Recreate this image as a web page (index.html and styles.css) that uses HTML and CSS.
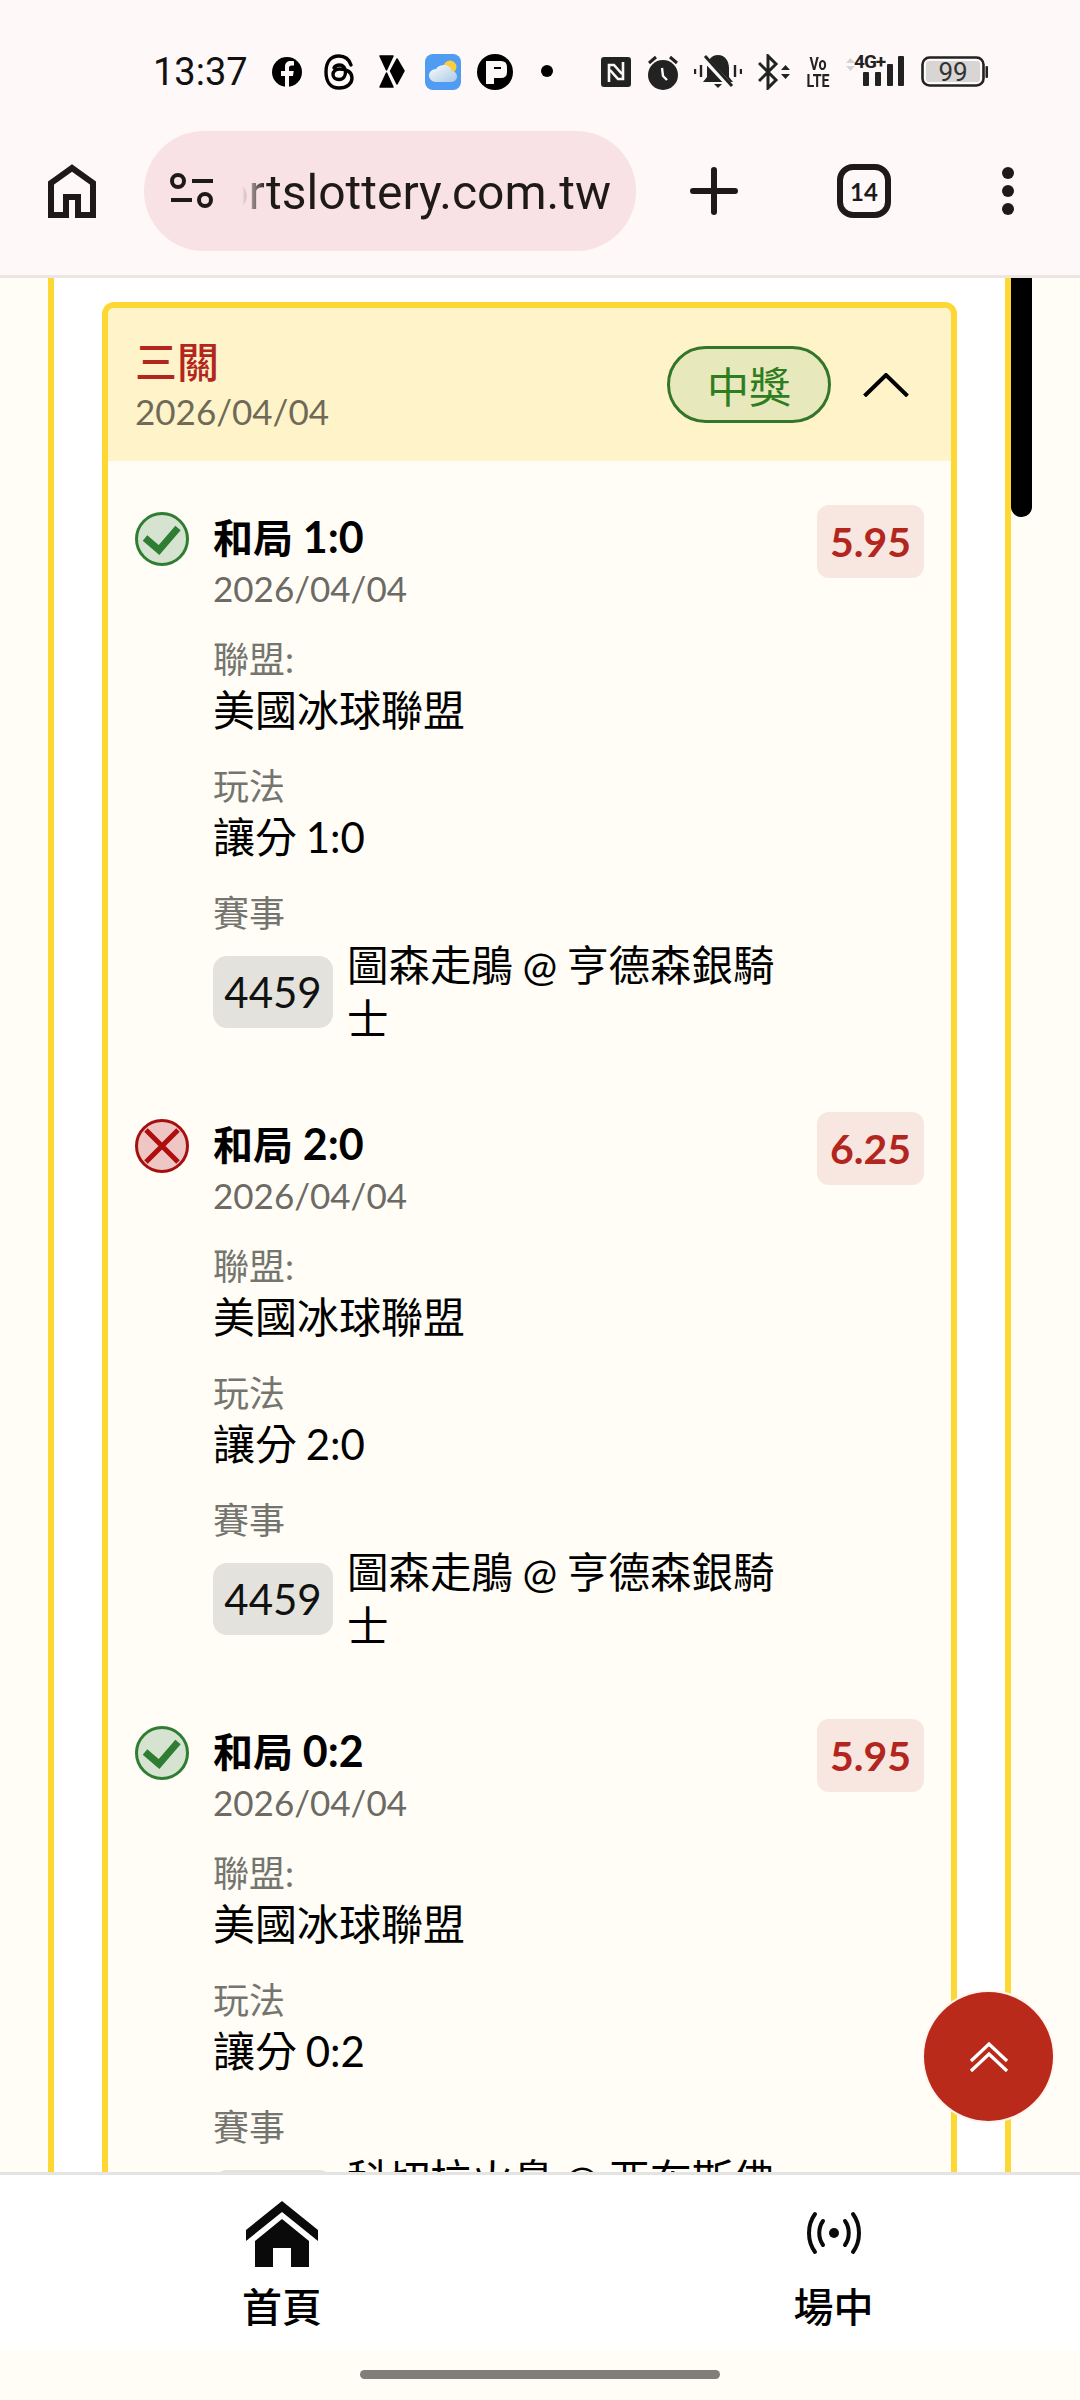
FILE: index.html
```html
<!DOCTYPE html>
<html lang="zh-Hant">
<head>
  <meta charset="UTF-8">
  <title>Sports Lottery</title>
  <link rel="stylesheet" href="styles.css">
</head>
<body>

<div class="phone">
  <!-- Status bar -->
  <div class="statusbar">
    <div class="status-left">
      <span class="clock">13:37</span>
      <svg class="s-icon" viewBox="0 0 36 36"><circle cx="18" cy="18" r="15" fill="#000"/><path fill="#fdf8f8" d="M20 33V22h4l.7-5H20v-3c0-1.500.7-2.500 2.600-2.500H25V7.300c-1-.2-2.300-.3-3.300-.3-3.500 0-5.700 2-5.700 5.800V17h-4v5h4v11z"/></svg>
      <svg class="s-icon" viewBox="0 0 36 36"><path fill="none" stroke="#000" stroke-width="3.400" stroke-linecap="round" d="M30 11C28 5 24 2 18 2 9 2 5 9 5 18s4 16 13 16c8 0 13-4.500 13-10 0-6-5.500-9-12-9-4.500 0-7 2.500-7 5.500 0 3 2.500 5 6 5 4.500 0 6.500-3.500 6.500-7.500 0-4.500-2.500-7-6-7-2.500 0-4.500 1-5.500 2.800"/></svg>
      <svg class="s-icon" viewBox="0 0 36 36"><path fill="#000" stroke="#000" stroke-width="1.500" stroke-linejoin="round" d="M7 2h13l-6.500 14zM24 5l7 12-7 13-6.500-13zM13.500 19L20 33H7z"/></svg>
      <svg class="s-icon" viewBox="0 0 36 36">
        <defs>
          <linearGradient id="cloudFill" x1="0" y1="0" x2="1" y2="1"><stop offset="0" stop-color="#fdfdf8"/><stop offset="1" stop-color="#a8c8e8"/></linearGradient>
        </defs>
        <rect width="36" height="36" rx="8" fill="#4f9cf2"/>
        <circle cx="25" cy="13" r="6.500" fill="#fbcf3a"/>
        <path fill="url(#cloudFill)" d="M11 28c-4 0-7-3-7-6.500S7 15 11 15c2-3 5-4 8-4 4 0 7 2.500 8 6 3 .5 5 2.500 5 5.500s-2.500 5.500-6 5.500z"/>
      </svg>
      <svg class="s-icon" viewBox="0 0 36 36"><circle cx="18" cy="18" r="18" fill="#000"/><path fill="#fdf8f8" d="M9 7h15q6 0 6 6v5q0 6-6 6h-7v6H9z"/><rect x="17" y="13" width="7" height="2" fill="#000"/></svg>
      <svg class="s-icon" viewBox="0 0 36 36"><circle cx="18" cy="17" r="6" fill="#000"/></svg>
    </div>
    <div class="status-right">
      <svg class="i-nfc" viewBox="0 0 31 30"><rect width="30" height="30" rx="3" fill="#222"/><path fill="none" stroke="#fdf8f8" stroke-width="2.600" d="M8 25V8h5l8 9M22 5v17h-5l-8-9"/></svg>
      <svg class="i-alarm" viewBox="0 0 30 36"><circle cx="15" cy="21" r="15" fill="#222"/><path stroke="#222" stroke-width="3" d="M1 9l7-6M29 9l-7-6"/><path fill="none" stroke="#fdf8f8" stroke-width="2.400" d="M14 14l1 8 4 4"/></svg>
      <svg class="i-bell" viewBox="0 0 48 36">
        <path fill="#222" d="M24 1c-7 0-11 6-11 13v9l-4 5h30l-4-5v-9c0-7-4-13-11-13zM20 30h8l-4 4z"/>
        <path stroke="#fdf8f8" stroke-width="6" d="M10 4l28 30"/>
        <path stroke="#222" stroke-width="3" d="M11 2l27 30"/>
        <path stroke="#222" stroke-width="2.400" d="M1 15v5M7 11v12M41 11v12M47 15v5"/>
      </svg>
      <svg class="i-bt" viewBox="0 0 32 36">
        <path fill="none" stroke="#222" stroke-width="3" d="M1 9l17 17-8 8V2l8 8L1 27"/>
        <path fill="#222" d="M23 16l4.500-5 4.500 5zM23 20l4.500 5 4.500-5z"/>
      </svg>
      <div class="volte"><span>Vo</span><span>LTE</span></div>
      <svg class="i-signal" viewBox="0 0 59 36">
        <path fill="#d6d3d2" d="M0 9l4.500-5L9 9zM0 12l4.500 5L9 12z"/>
        <text class="sig-text" x="8" y="14">4G+</text>
        <rect x="17" y="18" width="6" height="14" rx="1" fill="#222"/>
        <rect x="29" y="18" width="6" height="14" rx="1" fill="#222"/>
        <rect x="41" y="10" width="6" height="22" rx="1" fill="#222"/>
        <rect x="52" y="2" width="6" height="30" rx="1" fill="#222"/>
      </svg>
      <svg class="i-batt" viewBox="0 0 67 36">
        <rect x="1.500" y="3.500" width="61" height="28" rx="7" fill="none" stroke="#222" stroke-width="2.600"/>
        <rect x="5" y="7" width="54" height="21" rx="3" fill="#d8d5d5"/>
        <rect x="64.500" y="12" width="2.500" height="12" rx="1" fill="#222"/>
        <text class="batt-text" x="32" y="27">99</text>
      </svg>
    </div>
  </div>

  <!-- Browser toolbar -->
  <div class="toolbar">
    <svg class="tb-home" viewBox="0 0 48 54"><path fill="none" stroke="#1f1a1a" stroke-width="6" d="M3 51V19L24 4l21 15v32H30V33H18v18z"/></svg>
    <div class="urlbar">
      <svg class="tune" viewBox="0 0 48 42">
        <g fill="none" stroke="#1f1a1a" stroke-width="4">
          <circle cx="10" cy="11" r="6"/>
          <circle cx="37" cy="30" r="6"/>
          <path d="M24 11h21M3 30h21"/>
        </g>
      </svg>
      <div class="url"><span>sportslottery.com.tw</span></div>
    </div>
    <svg class="tb-plus" viewBox="0 0 48 48"><path stroke="#1f1a1a" stroke-width="6" stroke-linecap="round" d="M24 3v42M3 24h42"/></svg>
    <div class="tabs-count">14</div>
    <svg class="tb-more" viewBox="0 0 12 48"><circle cx="6" cy="6" r="6" fill="#1f1a1a"/><circle cx="6" cy="24" r="6" fill="#1f1a1a"/><circle cx="6" cy="42" r="6" fill="#1f1a1a"/></svg>
  </div>

  <!-- Page -->
  <div class="page">
    <div class="outer">
      <div class="card">
        <div class="card-head">
          <div class="head-text">
            <div class="head-title">三關</div>
            <div class="head-date">2026/04/04</div>
          </div>
          <div class="won-pill">中獎</div>
          <svg class="chev" viewBox="0 0 46 24"><path fill="none" stroke="#000" stroke-width="4" d="M1.500 23L23 2l21.500 21"/></svg>
        </div>

        <div class="card-body">
          <div class="bet">
            <svg class="mark" viewBox="0 0 54 54"><circle cx="27" cy="27" r="25.500" fill="#d5e3d0" stroke="#2e7d32" stroke-width="3"/><path fill="none" stroke="#2e7d32" stroke-width="7" d="M10 26l14 12 19-22"/></svg>
            <div class="bet-main">
              <div class="bet-title">和局 <span class="score">1:0</span></div>
              <div class="bet-date">2026/04/04</div>
              <div class="label first">聯盟:</div>
              <div class="value">美國冰球聯盟</div>
              <div class="label">玩法</div>
              <div class="value">讓分 1:0</div>
              <div class="label">賽事</div>
              <div class="match">
                <span class="chip">4459</span>
                <span class="teams">圖森走鵑 @ 亨德森銀騎士</span>
              </div>
            </div>
            <div class="odds">5.95</div>
          </div>

          <div class="bet">
            <svg class="mark" viewBox="0 0 54 54"><circle cx="27" cy="27" r="25.500" fill="#eec7c5" stroke="#a50f0f" stroke-width="3"/><path stroke="#b00d0d" stroke-width="5" d="M11 11l32 32M43 11L11 43"/></svg>
            <div class="bet-main">
              <div class="bet-title">和局 <span class="score">2:0</span></div>
              <div class="bet-date">2026/04/04</div>
              <div class="label first">聯盟:</div>
              <div class="value">美國冰球聯盟</div>
              <div class="label">玩法</div>
              <div class="value">讓分 2:0</div>
              <div class="label">賽事</div>
              <div class="match">
                <span class="chip">4459</span>
                <span class="teams">圖森走鵑 @ 亨德森銀騎士</span>
              </div>
            </div>
            <div class="odds">6.25</div>
          </div>

          <div class="bet">
            <svg class="mark" viewBox="0 0 54 54"><circle cx="27" cy="27" r="25.500" fill="#d5e3d0" stroke="#2e7d32" stroke-width="3"/><path fill="none" stroke="#2e7d32" stroke-width="7" d="M10 26l14 12 19-22"/></svg>
            <div class="bet-main">
              <div class="bet-title">和局 <span class="score">0:2</span></div>
              <div class="bet-date">2026/04/04</div>
              <div class="label first">聯盟:</div>
              <div class="value">美國冰球聯盟</div>
              <div class="label">玩法</div>
              <div class="value">讓分 0:2</div>
              <div class="label">賽事</div>
              <div class="match">
                <span class="chip">4460</span>
                <span class="teams">科切拉火鳥 @ 亞布斯佛加人</span>
              </div>
            </div>
            <div class="odds">5.95</div>
          </div>
        </div>
      </div>
    </div>
    <div class="scroll-thumb"></div>
  </div>

  <!-- Bottom nav -->
  <div class="tabbar">
    <div class="tab">
      <svg class="tab-home" viewBox="0 0 72 66"><path fill="#0a0a0a" d="M36 0l36 29v11L36 11 0 40V29zM36 18l27 22v26H45V47H27v19H9V40z"/></svg>
      <span>首頁</span>
    </div>
    <div class="tab tab-live">
      <svg class="tab-radio" viewBox="0 0 54 44">
        <circle cx="27" cy="22" r="5" fill="#0a0a0a"/>
        <path fill="none" stroke="#0a0a0a" stroke-width="4" stroke-linecap="round" d="M8 3C0 14 0 30 8 41M46 3c8 11 8 27 0 38M16 10c-5 7-5 17 0 24M38 10c5 7 5 17 0 24"/>
      </svg>
      <span>場中</span>
    </div>
  </div>
  <div class="gesture"><div class="gesture-bar"></div></div>

  <!-- Back to top -->
  <div class="fab">
    <svg viewBox="0 0 40 32"><path fill="none" stroke="#fff" stroke-width="3.200" d="M2 20L20 3l18 17M2 30l18-17 18 17"/></svg>
  </div>
</div>

</body>
</html>
```

FILE: styles.css
```css
* {
  box-sizing: border-box;
}

body {
  margin: 0;
  font-family: Lato, "Noto Sans CJK TC", sans-serif;
  color: #000;
}

svg {
  display: block;
  flex: none;
}

.phone {
  position: relative;
  width: 1080px;
  height: 2400px;
  display: flex;
  flex-direction: column;
  overflow: hidden;
  background: #fffdf5;
}

/* Status bar */
.statusbar {
  height: 131px;
  padding: 13px 92px 0 153px;
  display: flex;
  align-items: center;
  justify-content: space-between;
  background: #fef8f8;
}

.status-left {
  display: flex;
  align-items: center;
  gap: 16px;
}

.clock {
  font-family: Roboto, sans-serif;
  font-size: 38px;
  color: #111;
  margin-right: 5px;
}

.s-icon {
  width: 36px;
  height: 36px;
}

.status-right {
  display: flex;
  align-items: center;
  gap: 16px;
}

.i-nfc { width: 31px; height: 30px; }
.i-alarm { width: 30px; height: 36px; }
.i-bell { width: 48px; height: 36px; }
.i-bt { width: 32px; height: 36px; }
.i-signal { width: 59px; height: 36px; }
.i-batt { width: 67px; height: 36px; }

.volte {
  width: 24px;
  display: flex;
  flex-direction: column;
  align-items: center;
  font-family: Roboto, sans-serif;
  font-weight: 700;
  font-size: 19px;
  line-height: 17px;
  color: #222;
  transform: scaleX(0.75);
}

.sig-text {
  font-family: Roboto, sans-serif;
  font-weight: 700;
  font-size: 19px;
  fill: #222;
  letter-spacing: -1px;
}

.batt-text {
  font-family: Roboto, sans-serif;
  font-size: 26px;
  fill: #333;
  text-anchor: middle;
}

/* Browser toolbar */
.toolbar {
  height: 147px;
  padding-left: 48px;
  padding-bottom: 24px;
  display: flex;
  align-items: center;
  background: #fef8f8;
  border-bottom: 3px solid #ece5e3;
}

.tb-home {
  width: 48px;
  height: 54px;
}

.urlbar {
  width: 492px;
  height: 120px;
  margin-left: 48px;
  padding: 0 25px 0 24px;
  display: flex;
  align-items: center;
  background: #f8e2e6;
  border-radius: 60px;
}

.tune {
  width: 48px;
  height: 42px;
}

.url {
  flex: 1;
  overflow: hidden;
  display: flex;
  justify-content: flex-end;
  margin-left: 24px;
  padding-top: 3px;
  font-family: Roboto, sans-serif;
  font-size: 48px;
  color: #1f1a1a;
  white-space: nowrap;
  -webkit-mask-image: linear-gradient(to right, transparent 2px, #000 26px);
  mask-image: linear-gradient(to right, transparent 2px, #000 26px);
}

.tb-plus {
  width: 48px;
  height: 48px;
  margin-left: 54px;
}

.tabs-count {
  width: 54px;
  height: 54px;
  margin-left: 99px;
  display: flex;
  align-items: center;
  justify-content: center;
  border: 6px solid #1f1a1a;
  border-radius: 16px;
  font-size: 24px;
  font-weight: 700;
  color: #1f1a1a;
}

.tb-more {
  width: 12px;
  height: 48px;
  margin-left: 111px;
}

/* Page */
.page {
  position: relative;
  flex: 1;
  min-height: 0;
  overflow: hidden;
}

.outer {
  width: 963px;
  height: 100%;
  margin-left: 48px;
  padding: 24px 48px 0;
  background: #fff;
  border-left: 6px solid #fdd835;
  border-right: 6px solid #fdd835;
}

.scroll-thumb {
  position: absolute;
  top: 0;
  left: 1011px;
  width: 21px;
  height: 239px;
  background: #000;
  border-radius: 0 0 10px 10px;
}

.card {
  width: 855px;
  border: 6px solid #fdd835;
  border-radius: 12px;
  background: #fffdf5;
  overflow: hidden;
}

.card-head {
  height: 153px;
  padding: 0 42px 0 27px;
  display: flex;
  align-items: center;
  background: #fff3c9;
}

.head-text {
  flex: 1;
  padding-top: 5px;
}

.head-title {
  font-size: 42px;
  line-height: 49px;
  font-weight: 500;
  color: #b3261e;
}

.head-date {
  font-size: 35px;
  line-height: 49px;
  color: #6f6a57;
}

.won-pill {
  width: 164px;
  height: 77px;
  margin-right: 32px;
  display: flex;
  align-items: center;
  justify-content: center;
  border: 3px solid #33752a;
  border-radius: 39px;
  background: #e8e8bd;
  font-size: 42px;
  color: #2e7d20;
}

.chev {
  width: 46px;
  height: 24px;
}

.card-body {
  padding: 44px 27px 0;
  display: flex;
  flex-direction: column;
  gap: 66px;
}

.bet {
  display: flex;
  align-items: flex-start;
}

.mark {
  width: 54px;
  height: 54px;
  margin-top: 7px;
  margin-right: 24px;
}

.bet-main {
  flex: 1;
  min-width: 0;
  padding-top: 7px;
  padding-right: 20px;
}

.bet-title {
  font-size: 40px;
  line-height: 52px;
  font-weight: 700;
}

.score {
  font-size: 43px;
  line-height: 1;
}

.bet-date {
  font-size: 35px;
  line-height: 49px;
  color: #6c6a65;
}

.label {
  margin-top: 25px;
  font-size: 36px;
  line-height: 46px;
  color: #757570;
}

.label.first {
  margin-top: 23px;
}

.value {
  font-size: 42px;
  line-height: 56px;
  word-spacing: -2px;
}

.match {
  margin-top: 2px;
  display: flex;
  align-items: center;
  gap: 14px;
}

.chip {
  flex: none;
  width: 120px;
  height: 72px;
  display: flex;
  align-items: center;
  justify-content: center;
  background: #e3e2dc;
  border-radius: 14px;
  font-size: 42px;
  color: #111;
}

.teams {
  font-size: 41.500px;
  line-height: 54px;
  word-spacing: -1px;
}

.odds {
  flex: none;
  width: 107px;
  height: 73px;
  display: flex;
  align-items: center;
  justify-content: center;
  background: #f8e6e1;
  border-radius: 12px;
  font-size: 41px;
  font-weight: 700;
  color: #b3261e;
}

/* Bottom nav */
.tabbar {
  height: 178px;
  display: grid;
  grid-template-columns: 564px 516px;
  background: #fff;
  border-top: 3px solid #e4e4e2;
  position: relative;
}

.tab {
  padding-top: 26px;
  display: flex;
  flex-direction: column;
  align-items: center;
  font-size: 40px;
  line-height: 56px;
  font-weight: 500;
}

.tab-live {
  padding-left: 23px;
}

.tab-home {
  width: 72px;
  height: 66px;
  margin-bottom: 12px;
}

.tab-radio {
  width: 54px;
  height: 44px;
  margin-top: 10px;
  margin-bottom: 24px;
}

.gesture {
  height: 50px;
  padding-top: 20px;
  display: flex;
  justify-content: center;
  background: #fffdf5;
}

.gesture-bar {
  width: 360px;
  height: 9px;
  border-radius: 5px;
  background: #807e78;
}

/* Back to top */
.fab {
  position: absolute;
  top: 1992px;
  left: 924px;
  width: 129px;
  height: 129px;
  display: flex;
  align-items: center;
  justify-content: center;
  border-radius: 50%;
  background: #b92a1a;
  box-shadow: 0 0 0 2px #fff5f0;
}

.fab svg {
  width: 40px;
  height: 32px;
}
```
